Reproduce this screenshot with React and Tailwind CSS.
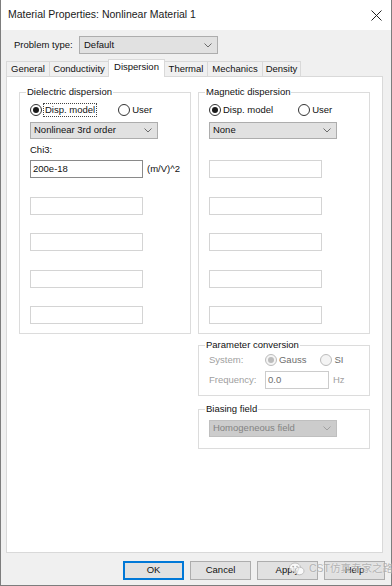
import React from 'react'

function Chevron({ color = '#6b6b6b' }) {
  return (
    <svg width="8" height="5" viewBox="0 0 8 5">
      <polyline points="0.5,0.5 4,4 7.5,0.5" fill="none" stroke={color} strokeWidth="1" />
    </svg>
  )
}

function Radio({ label, checked, disabled, focus }) {
  return (
    <div className="flex items-center gap-[2px] h-[14px]">
      <span
        className={`w-[12px] h-[12px] rounded-full border flex items-center justify-center ${
          disabled ? 'border-[#bcbcbc] bg-[#f4f4f4]' : 'border-[#333333] bg-white'
        }`}
      >
        {checked && (
          <span className={`w-[6px] h-[6px] rounded-full ${disabled ? 'bg-[#bcbcbc]' : 'bg-[#1a1a1a]'}`} />
        )}
      </span>
      <span
        className={`leading-[12px] ${focus ? 'outline outline-1 outline-dotted outline-[#444] px-[1px]' : ''} ${
          disabled ? 'text-[#6d6d6d]' : 'text-[#111]'
        }`}
      >
        {label}
      </span>
    </div>
  )
}

function Select({ value, width, disabled }) {
  return (
    <div
      className={`h-[17px] border flex items-center justify-between pl-[3px] pr-[5px] ${width} ${
        disabled ? 'bg-[#cccccc] border-[#bfbfbf] text-[#838383]' : 'bg-[#e1e1e1] border-[#adadad] text-[#111]'
      }`}
    >
      <span>{value}</span>
      <Chevron color={disabled ? '#a0a0a0' : '#6b6b6b'} />
    </div>
  )
}

function TextBox({ value, dark, className = '' }) {
  return (
    <div
      className={`w-[113px] h-[18px] border bg-white flex items-center px-[2px] ${
        dark ? 'border-[#8a8a8a]' : 'border-[#d4d4d4]'
      } ${className}`}
    >
      {value}
    </div>
  )
}

function Group({ title, className = '', children }) {
  return (
    <fieldset className={`border border-[#dcdcdc] px-[10px] ${className}`}>
      <legend className="ml-[-4px] px-[1px] h-[14px] leading-[14px] text-[#111]">{title}</legend>
      {children}
    </fieldset>
  )
}

const tabs = [
  { name: 'General', w: 'w-[44px]' },
  { name: 'Conductivity', w: 'w-[60px]' },
  { name: 'Dispersion', w: 'w-[57px]', active: true },
  { name: 'Thermal', w: 'w-[44px]' },
  { name: 'Mechanics', w: 'w-[56px]' },
  { name: 'Density', w: 'w-[39px]' },
]

export default function App() {
  return (
    <div className="relative w-[392px] h-[586px] bg-[#f0f0f0] border-x border-b border-[#7d7d7d] flex flex-col text-[9.5px] font-[family-name:'Liberation_Sans',Arial,sans-serif] text-[#111]">
      {/* Title bar */}
      <div className="h-[30px] bg-white flex items-center justify-between pl-[7px] pr-[9px]">
        <span className="text-[10.5px] text-[#1a1a1a]">Material Properties: Nonlinear Material 1</span>
        <svg width="11" height="11" viewBox="0 0 11 11">
          <path d="M0.5 0.5 L10.5 10.5 M10.5 0.5 L0.5 10.5" stroke="#222" strokeWidth="1" />
        </svg>
      </div>

      {/* Problem type */}
      <div className="flex items-center mt-[6px] pl-[13px] h-[18px]">
        <span className="w-[65px]">Problem type:</span>
        <div className="w-[139px] h-[18px] border border-[#adadad] bg-[#e1e1e1] flex items-center justify-between pl-[4px] pr-[5px]">
          <span>Default</span>
          <Chevron />
        </div>
      </div>

      {/* Tabs */}
      <div className="flex items-end h-[18px] mt-[5px] pl-[5px] mb-[-1px]">
        {tabs.map((t) => (
          <div
            key={t.name}
            className={`${t.w} ml-[-1px] first:ml-0 border-t border-x border-[#d9d9d9] flex items-center justify-center ${
              t.active ? 'relative z-10 h-[18px] bg-white pb-[2px]' : 'h-[16px] bg-[#f0f0f0]'
            }`}
          >
            {t.name}
          </div>
        ))}
      </div>

      {/* Tab panel */}
      <div className="ml-[5px] w-[377px] h-[477px] bg-white border border-[#d9d9d9] flex gap-[7px] pl-[12px] pt-[8px]">
        {/* Left column */}
        <Group title="Dielectric dispersion" className="w-[171px] h-[249px]">
          <div className="flex items-center gap-[22px] mt-[4px]">
            <Radio label="Disp. model" checked focus />
            <Radio label="User" />
          </div>
          <Select value="Nonlinear 3rd order" width="w-[128px] mt-[5px]" />
          <div className="h-[14px] leading-[14px] mt-[4px]">Chi3:</div>
          <div className="flex items-center gap-[4px] mt-[3px]">
            <TextBox value="200e-18" dark />
            <span>(m/V)^2</span>
          </div>
          <TextBox className="mt-[19px]" />
          <TextBox className="mt-[18px]" />
          <TextBox className="mt-[19px]" />
          <TextBox className="mt-[18px]" />
        </Group>

        {/* Right column */}
        <div className="flex flex-col">
          <Group title="Magnetic dispersion" className="w-[172px] h-[249px]">
            <div className="flex items-center gap-[25px] mt-[4px]">
              <Radio label="Disp. model" checked />
              <Radio label="User" />
            </div>
            <Select value="None" width="w-[128px] mt-[5px]" />
            <TextBox className="mt-[21px]" />
            <TextBox className="mt-[19px]" />
            <TextBox className="mt-[18px]" />
            <TextBox className="mt-[19px]" />
            <TextBox className="mt-[18px]" />
          </Group>

          <Group title="Parameter conversion" className="w-[172px] h-[58px] mt-[4px] px-[7px]">
            <div className="flex items-center h-[14px] mt-[1px]">
              <span className="w-[56px] text-[#a0a0a0]">System:</span>
              <div className="flex items-center gap-[14px]">
                <Radio label="Gauss" checked disabled />
                <Radio label="SI" disabled />
              </div>
            </div>
            <div className="flex items-center h-[18px] mt-[4px]">
              <span className="w-[56px] text-[#a0a0a0]">Frequency:</span>
              <div className="w-[64px] h-[18px] border border-[#cccccc] bg-white flex items-center px-[2px] text-[#6d6d6d]">0.0</div>
              <span className="ml-[4px] text-[#a0a0a0]">Hz</span>
            </div>
          </Group>

          <Group title="Biasing field" className="w-[172px] h-[47px] mt-[6px]">
            <Select value="Homogeneous field" width="w-[128px] mt-[4px]" disabled />
          </Group>
        </div>
      </div>

      {/* Buttons */}
      <div className="flex justify-end gap-[6px] mt-[8px] pr-[6px]">
        <button className="w-[61px] h-[19px] bg-[#e1e1e1] border-2 border-[#0078d7]">OK</button>
        <button className="w-[61px] h-[19px] bg-[#e1e1e1] border border-[#adadad]">Cancel</button>
        <button className="w-[61px] h-[19px] bg-[#e1e1e1] border border-[#adadad]">Apply</button>
        <button className="w-[61px] h-[19px] bg-[#e1e1e1] border border-[#adadad]">Help</button>
      </div>

      {/* Watermark */}
      <div className="absolute left-[288px] top-[561px] flex items-center gap-[4px] whitespace-nowrap opacity-80">
        <svg width="16" height="14" viewBox="0 0 16 14">
          <ellipse cx="6" cy="5.5" rx="5.5" ry="4.5" fill="#fff" stroke="#a8a8a8" strokeWidth="0.8" />
          <ellipse cx="10.5" cy="9" rx="4.5" ry="3.8" fill="#fff" stroke="#a8a8a8" strokeWidth="0.8" />
          <circle cx="4" cy="4.5" r="0.8" fill="#a8a8a8" />
          <circle cx="8" cy="4.5" r="0.8" fill="#a8a8a8" />
        </svg>
        <span className="text-[10.5px] text-[#a8a8a8] font-[family-name:'Liberation_Sans','Noto_Sans_CJK_SC',sans-serif] [text-shadow:0_0_2px_#fff]">
          CST仿真专家之路
        </span>
      </div>
    </div>
  )
}
